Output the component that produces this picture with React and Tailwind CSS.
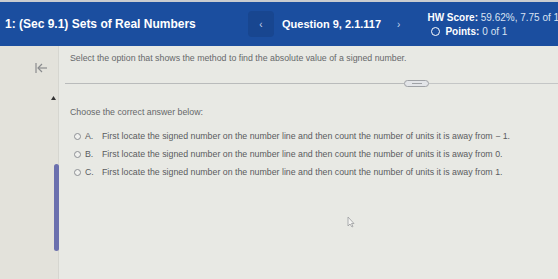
import React from 'react'

export default function App() {
  return (
    <div className="w-[558px] h-[279px] overflow-hidden bg-[#e8e9e4] relative" style={{ fontFamily: '"Liberation Sans", Arial, sans-serif' }}>
      {/* top strip */}
      <div className="h-[2px] bg-[#c9ccd0]" />

      {/* header */}
      <header className="h-[44px] bg-[#1b4e9f] flex items-center text-white overflow-hidden">
        <div className="w-[248px] shrink-0 flex items-center overflow-hidden">
          <span className="ml-[5px] font-bold text-[12px] whitespace-nowrap">1: (Sec 9.1) Sets of Real Numbers</span>
        </div>
        <div className="w-[26px] h-[26px] shrink-0 flex items-center justify-center rounded-sm bg-[#184690] text-[10px] text-[#c6d4ee]">‹</div>
        <span className="ml-[8px] shrink-0 font-bold text-[11px] whitespace-nowrap">Question 9, 2.1.117</span>
        <span className="ml-[16px] shrink-0 text-[10px] text-[#c6d4ee]">›</span>
        <div className="ml-[27px] shrink-0 flex flex-col gap-[3px] text-[10px] leading-[11px] whitespace-nowrap">
          <div><span className="font-bold">HW Score:</span> <span className="text-[#d9e2f2]">59.62%, 7.75 of 13</span></div>
          <div className="flex items-center pl-[4px]">
            <span className="w-[9px] h-[9px] rounded-full border-[1.5px] border-white" />
            <span className="ml-[5px] font-bold">Points:</span>
            <span className="ml-[3px] text-[#d9e2f2]">0 of 1</span>
          </div>
        </div>
      </header>

      <div className="flex h-[233px]">
        {/* sidebar */}
        <aside className="w-[59px] shrink-0 bg-[#e3e2db] border-r border-[#d6d6d0] flex flex-col items-end">
          <div className="w-full flex justify-start pl-[35px] pt-[16px]">
            <svg width="13" height="12" viewBox="0 0 13 12" fill="none" stroke="#8a8c8e" strokeWidth="1.2">
              <path d="M1 1 V11" />
              <path d="M12 6 H3" />
              <path d="M7 2 L3 6 L7 10" />
            </svg>
          </div>
          <div className="w-full flex pl-[51px] mt-[22px]">
            <svg width="5" height="4" viewBox="0 0 5 4"><path d="M2.5 0 L5 4 H0 Z" fill="#333" /></svg>
          </div>
          <div className="mr-[-1px] mt-[64px] w-[5px] h-[87px] rounded-sm bg-[#6b70ae]" />
        </aside>

        {/* content */}
        <main className="flex-1 pl-[6px] text-[8.8px] leading-[10px] text-[#5a5c5e]">
          <p className="pl-[5px] pt-[7px] whitespace-nowrap text-[#66686a]">Select the option that shows the method to find the absolute value of a signed number.</p>
          <div className="mt-[17px] flex items-center">
            <div className="w-[339px] h-px bg-[#b9bbbb]" />
            <div className="w-[25px] h-[7px] rounded-full border border-[#9fa2a6] bg-[#e3e5e8] flex items-center justify-center">
              <div className="w-[10px] h-px bg-[#9fa2a6]" />
            </div>
            <div className="flex-1 h-px bg-[#c4c6c6]" />
          </div>
          <p className="pl-[5px] mt-[20px] whitespace-nowrap text-[#66686a]">Choose the correct answer below:</p>
          <div className="mt-[14px] flex flex-col gap-[8px]">
            {[
              ['A.', 'First locate the signed number on the number line and then count the number of units it is away from \u2212 1.'],
              ['B.', 'First locate the signed number on the number line and then count the number of units it is away from 0.'],
              ['C.', 'First locate the signed number on the number line and then count the number of units it is away from 1.'],
            ].map(([l, t]) => (
              <div key={l} className="flex items-center whitespace-nowrap">
                <span className="ml-[9px] w-[7px] h-[7px] rounded-full border border-[#8d9094] bg-[#f0f1ee]" />
                <span className="ml-[4px] w-[17px]">{l}</span>
                <span>{t}</span>
              </div>
            ))}
          </div>
        </main>
      </div>

      {/* mouse cursor */}
      <svg className="absolute left-[347px] top-[216px]" width="8" height="12" viewBox="0 0 8 12">
        <path d="M1 1 V10 L3 8 L5 11 L6 10.5 L4.5 7.5 H7 Z" fill="#f4f4f2" stroke="#9a9c9e" strokeWidth="0.8" />
      </svg>
    </div>
  )
}
